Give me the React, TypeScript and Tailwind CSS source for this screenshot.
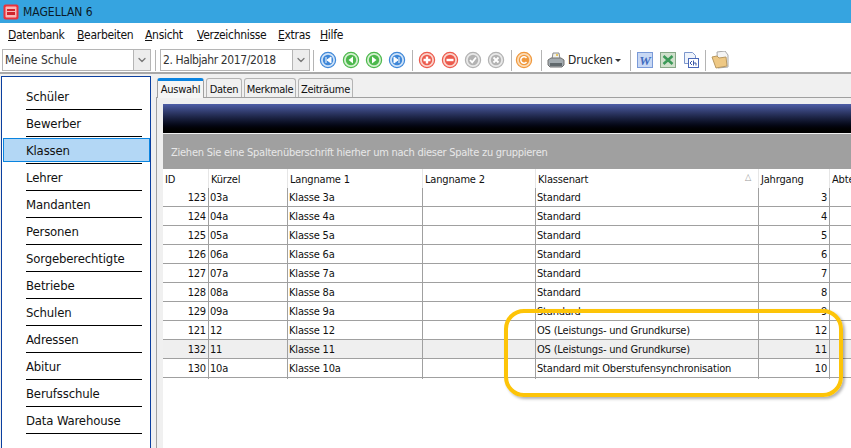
import { ChevronDown } from "lucide-react";

const navItems = [
    "Schüler",
    "Bewerber",
    "Klassen",
    "Lehrer",
    "Mandanten",
    "Personen",
    "Sorgeberechtigte",
    "Betriebe",
    "Schulen",
    "Adressen",
    "Abitur",
    "Berufsschule",
    "Data Warehouse",
];

const rows = [
    ["123", "03a", "Klasse 3a", "Standard", "3"],
    ["124", "04a", "Klasse 4a", "Standard", "4"],
    ["125", "05a", "Klasse 5a", "Standard", "5"],
    ["126", "06a", "Klasse 6a", "Standard", "6"],
    ["127", "07a", "Klasse 7a", "Standard", "7"],
    ["128", "08a", "Klasse 8a", "Standard", "8"],
    ["129", "09a", "Klasse 9a", "Standard", "9"],
    ["121", "12", "Klasse 12", "OS (Leistungs- und Grundkurse)", "12"],
    ["132", "11", "Klasse 11", "OS (Leistungs- und Grundkurse)", "11"],
    ["130", "10a", "Klasse 10a", "Standard mit Oberstufensynchronisation", "10"],
];

const gridCols = "grid grid-cols-[46px_79px_135px_113px_223px_71px_60px] w-[727px]";

function Combo({ text, width, tracking }: { text: string; width: string; tracking?: string }) {
    return (
        <div className={`flex h-[22px] border border-[#b5b5b5] bg-white ${width}`}>
            <div className={`flex-1 pl-[2px] leading-[20px] text-[#333] text-[12px] ${tracking ?? ""}`}>{text}</div>
            <div className="w-[17px] bg-[#ededed] border-l border-[#b5b5b5] flex items-center justify-center">
                <ChevronDown size={12} strokeWidth={2.5} className="text-[#777]" />
            </div>
        </div>
    );
}

function Round({ color, light, children }: { color: string; light: string; children: React.ReactNode }) {
    return (
        <svg width="18" height="18" viewBox="0 0 18 18" className="shrink-0">
            <circle cx="9" cy="9" r="7.6" fill={light} stroke={color} strokeWidth="1.2" />
            <circle cx="9" cy="9" r="5.2" fill={color} />
            {children}
        </svg>
    );
}

function Tab({ label, active, width }: { label: string; active?: boolean; width: string }) {
    return (
        <div
            className={`text-center text-[11px] tracking-[-0.3px] border border-b-0 rounded-t-[3px] ${width} ${
                active
                    ? "h-[20px] leading-[18px] border-[#a0a0a0] border-t-[3px] border-t-[#0a84e0] bg-[#f5f5f5]"
                    : "h-[19px] leading-[21px] border-[#b4b4b4] bg-[#f0f0f0]"
            }`}
        >
            {label}
        </div>
    );
}

export default function App() {
    return (
        <div className="relative w-[851px] h-[448px] overflow-hidden bg-[#f0f0f0] text-[12px] text-[#111] font-['DejaVu_Sans_Condensed','DejaVu_Sans',sans-serif]">
            <div className="h-[23px] bg-[#36a4e0] flex items-center pl-[3px] gap-[4px]">
                <svg width="16" height="16" viewBox="0 0 16 16">
                    <rect x="0.5" y="0.5" width="15" height="15" rx="2" fill="#e8323c" />
                    <rect x="2.5" y="2.5" width="11" height="11" rx="1" fill="#f8b8b8" />
                    <rect x="4" y="5" width="8" height="6" fill="#d0242c" />
                    <rect x="4" y="7" width="8" height="1" fill="#f8b8b8" />
                </svg>
                <span className="text-[12px] text-[#0a1a28]">MAGELLAN 6</span>
            </div>

            <div className="h-[23px] pt-[1px] bg-white flex items-center pl-[8px] text-[12px] tracking-[-0.3px]">
                <span className="w-[69px]"><u>D</u>atenbank</span>
                <span className="w-[68px]"><u>B</u>earbeiten</span>
                <span className="w-[52px]"><u>A</u>nsicht</span>
                <span className="w-[81px]"><u>V</u>erzeichnisse</span>
                <span className="w-[42px]"><u>E</u>xtras</span>
                <span><u>H</u>ilfe</span>
            </div>

            <div className="h-[28px] pt-[2px] bg-white border-b-2 border-[#a8a8a8] flex items-center pl-[2px]">
                <Combo text="Meine Schule" width="w-[149px]" />
                <div className="w-px h-[21px] bg-[#b4b4b4] mx-[4px] shrink-0" />
                <Combo text="2. Halbjahr 2017/2018" width="w-[150px]" tracking="tracking-[-0.4px]" />
                <div className="w-px h-[21px] bg-[#b4b4b4] ml-[3px] mr-[5px] shrink-0" />
                <div className="flex gap-[5px] items-center">
                    <Round color="#3f87d8" light="#cfe3f8"><path d="M7 6v6M12 6v6L8 9z" fill="#fff" stroke="#fff" /></Round>
                    <Round color="#4cb84c" light="#d4f0d0"><path d="M11 5.5v7L6.5 9z" fill="#fff" /></Round>
                    <Round color="#4cb84c" light="#d4f0d0"><path d="M7 5.5v7L11.5 9z" fill="#fff" /></Round>
                    <Round color="#3f87d8" light="#cfe3f8"><path d="M11 6v6M6 6v6l4-3z" fill="#fff" stroke="#fff" /></Round>
                </div>
                <div className="w-px h-[21px] bg-[#b4b4b4] ml-[6px] mr-[5px] shrink-0" />
                <div className="flex gap-[5px] items-center">
                    <Round color="#ec5a4c" light="#fad4cc"><path d="M9 5.5v7M5.5 9h7" stroke="#fff" strokeWidth="2.4" /></Round>
                    <Round color="#ec5a4c" light="#fad4cc"><path d="M5.5 9h7" stroke="#fff" strokeWidth="2.4" /></Round>
                    <Round color="#b2b2b2" light="#e8e8e8"><path d="M6 9l2.2 2.4L12 6.5" stroke="#fff" strokeWidth="1.8" fill="none" /></Round>
                    <Round color="#b2b2b2" light="#e8e8e8"><path d="M6.5 6.5l5 5M11.5 6.5l-5 5" stroke="#fff" strokeWidth="1.8" /></Round>
                </div>
                <div className="w-px h-[21px] bg-[#b4b4b4] ml-[6px] mr-[3px] shrink-0" />
                <Round color="#f0983c" light="#fbdcb8"><path d="M11.5 7a3.2 3.2 0 1 0 0 4" stroke="#fff" strokeWidth="1.5" fill="none" /></Round>
                <div className="w-px h-[21px] bg-[#b4b4b4] ml-[8px] mr-[5px] shrink-0" />
                <svg width="18" height="18" viewBox="0 0 18 18" className="shrink-0">
                    <path d="M6 2h6l1 6H5z" fill="#f0f0ea" stroke="#8a8a8a" />
                    <path d="M9 3h2v2H9z" fill="#e8c860" />
                    <path d="M1 9l3-2h10l3 2v5l-2 2H3l-2-2z" fill="#a2aaaf" stroke="#707070" />
                    <rect x="3" y="12" width="12" height="3" fill="#60686c" />
                </svg>
                <span className="ml-[3px] w-[46px] text-[12px] text-[#222]">Drucken</span>
                <div className="ml-[1px] w-0 h-0 border-x-[3px] border-x-transparent border-t-[3px] border-t-[#333]" />
                <div className="w-px h-[21px] bg-[#b4b4b4] ml-[9px] mr-[6px] shrink-0" />
                <div className="flex gap-[7px] items-center">
                    <svg width="16" height="16" viewBox="0 0 16 16">
                        <rect x="0.5" y="0.5" width="15" height="15" fill="#c8d8f4" stroke="#7a9ad8" />
                        <text x="8" y="12.5" textAnchor="middle" fontSize="13" fontWeight="700" fontStyle="italic" fill="#3f6cc0" fontFamily="Liberation Serif">W</text>
                    </svg>
                    <svg width="16" height="16" viewBox="0 0 16 16">
                        <rect x="0.5" y="0.5" width="15" height="15" fill="#d0e0cc" stroke="#88a888" />
                        <path d="M3.5 4l9 8M12.5 4l-9 8" stroke="#3c9a58" strokeWidth="2.6" />
                    </svg>
                    <svg width="16" height="16" viewBox="0 0 16 16">
                        <path d="M1.5 0.5h8l3 3v8h-11z" fill="#eef3fb" stroke="#7d97cc" />
                        <rect x="5.5" y="6.5" width="10" height="9" fill="#fff" stroke="#4a68b8" />
                        <path d="M9 9l-2 2 2 2M10.5 8.5v5M10.5 11h2.5v2.5" stroke="#3a58a8" fill="none" />
                    </svg>
                </div>
                <div className="w-px h-[21px] bg-[#b4b4b4] ml-[6px] mr-[5px] shrink-0" />
                <svg width="18" height="18" viewBox="0 0 18 18" className="shrink-0">
                    <path d="M6 1l8-1 3 4v12l-10 1z" fill="#f4f4f4" stroke="#a8a8a8" />
                    <path d="M1 6l5-1 2 2 7-1 1 9-11 2z" fill="#eec884" stroke="#b89860" />
                </svg>
            </div>

            <div className="flex h-[374px] pt-[2px]">
                <div className="w-[150px] ml-px border border-b-0 border-[#0b3f9f] bg-white pt-[6px] pl-[1px] shrink-0">
                    {navItems.map((item) => (
                        <div key={item} className="relative h-[27px] text-[13px] tracking-[-0.15px] leading-[28px] pl-[23px]">
                            {item === "Klassen" && (
                                <div className="absolute left-0 right-0 top-px h-[24px] bg-[#b3d7f5] border border-[#0a84e0]" />
                            )}
                            <span className="relative">{item}</span>
                            <div className="absolute left-[23px] w-[116px] bottom-0 h-px bg-black" />
                        </div>
                    ))}
                </div>

                <div className="flex-1 pl-[5px] min-w-0">
                    <div className="flex gap-[2px] pt-[2px] pl-[1px] h-[21px]">
                        <Tab label="Auswahl" active width="w-[47px]" />
                        <Tab label="Daten" width="w-[36px]" />
                        <Tab label="Merkmale" width="w-[52px]" />
                        <Tab label="Zeiträume" width="w-[55px]" />
                    </div>
                    <div className="border-t border-l border-[#a0a0a0] pl-[6px] pt-[6px] h-[353px]">
                        <div className="h-[29px] bg-gradient-to-b from-[#4f5fa8] to-black" />
                        <div className="h-[35px] mt-px bg-[#a0a0a0] text-[#e8e8e8] pl-[8px] leading-[38px] text-[11px] tracking-[-0.25px]">
                            Ziehen Sie eine Spaltenüberschrift hierher um nach dieser Spalte zu gruppieren
                        </div>
                        <div className="bg-white h-[280px] overflow-hidden text-[11px] tracking-[-0.18px]">
                            <div className={`${gridCols} h-[19px] leading-[21px]`}>
                                {["ID", "Kürzel", "Langname 1", "Langname 2", "Klassenart", "Jahrgang", "Abteilung"].map((h) => (
                                    <div key={h} className="relative pl-[2px] border-r border-[#e6e6e6] whitespace-nowrap overflow-hidden">
                                        {h}
                                        {h === "Klassenart" && (
                                            <div className="absolute right-[7px] top-[4px] text-[9px] leading-[9px] text-[#999]">△</div>
                                        )}
                                    </div>
                                ))}
                            </div>
                            {rows.map((r) => (
                                <div
                                    key={r[0]}
                                    className={`${gridCols} h-[19px] leading-[20px] border-b border-[#a0a0a0] ${r[0] === "132" ? "bg-[#efefef]" : ""}`}
                                >
                                    <div className="text-right pr-[2px] border-r border-[#a0a0a0]">{r[0]}</div>
                                    <div className="pl-[1px] border-r border-[#a0a0a0]">{r[1]}</div>
                                    <div className="pl-[1px] border-r border-[#a0a0a0]">{r[2]}</div>
                                    <div className="border-r border-[#a0a0a0]" />
                                    <div className="pl-[1px] border-r border-[#a0a0a0] whitespace-nowrap">{r[3]}</div>
                                    <div className="text-right pr-[2px] border-r border-[#a0a0a0]">{r[4]}</div>
                                    <div />
                                </div>
                            ))}
                        </div>
                    </div>
                </div>
            </div>

            {/* gelbe markierung */}
            <div className="absolute left-[504px] top-[309px] w-[339px] h-[88px] border-[4px] border-[#fdc408] rounded-[20px] shadow-[2px_2px_3px_rgba(0,0,0,0.3)]" />
        </div>
    );
}
